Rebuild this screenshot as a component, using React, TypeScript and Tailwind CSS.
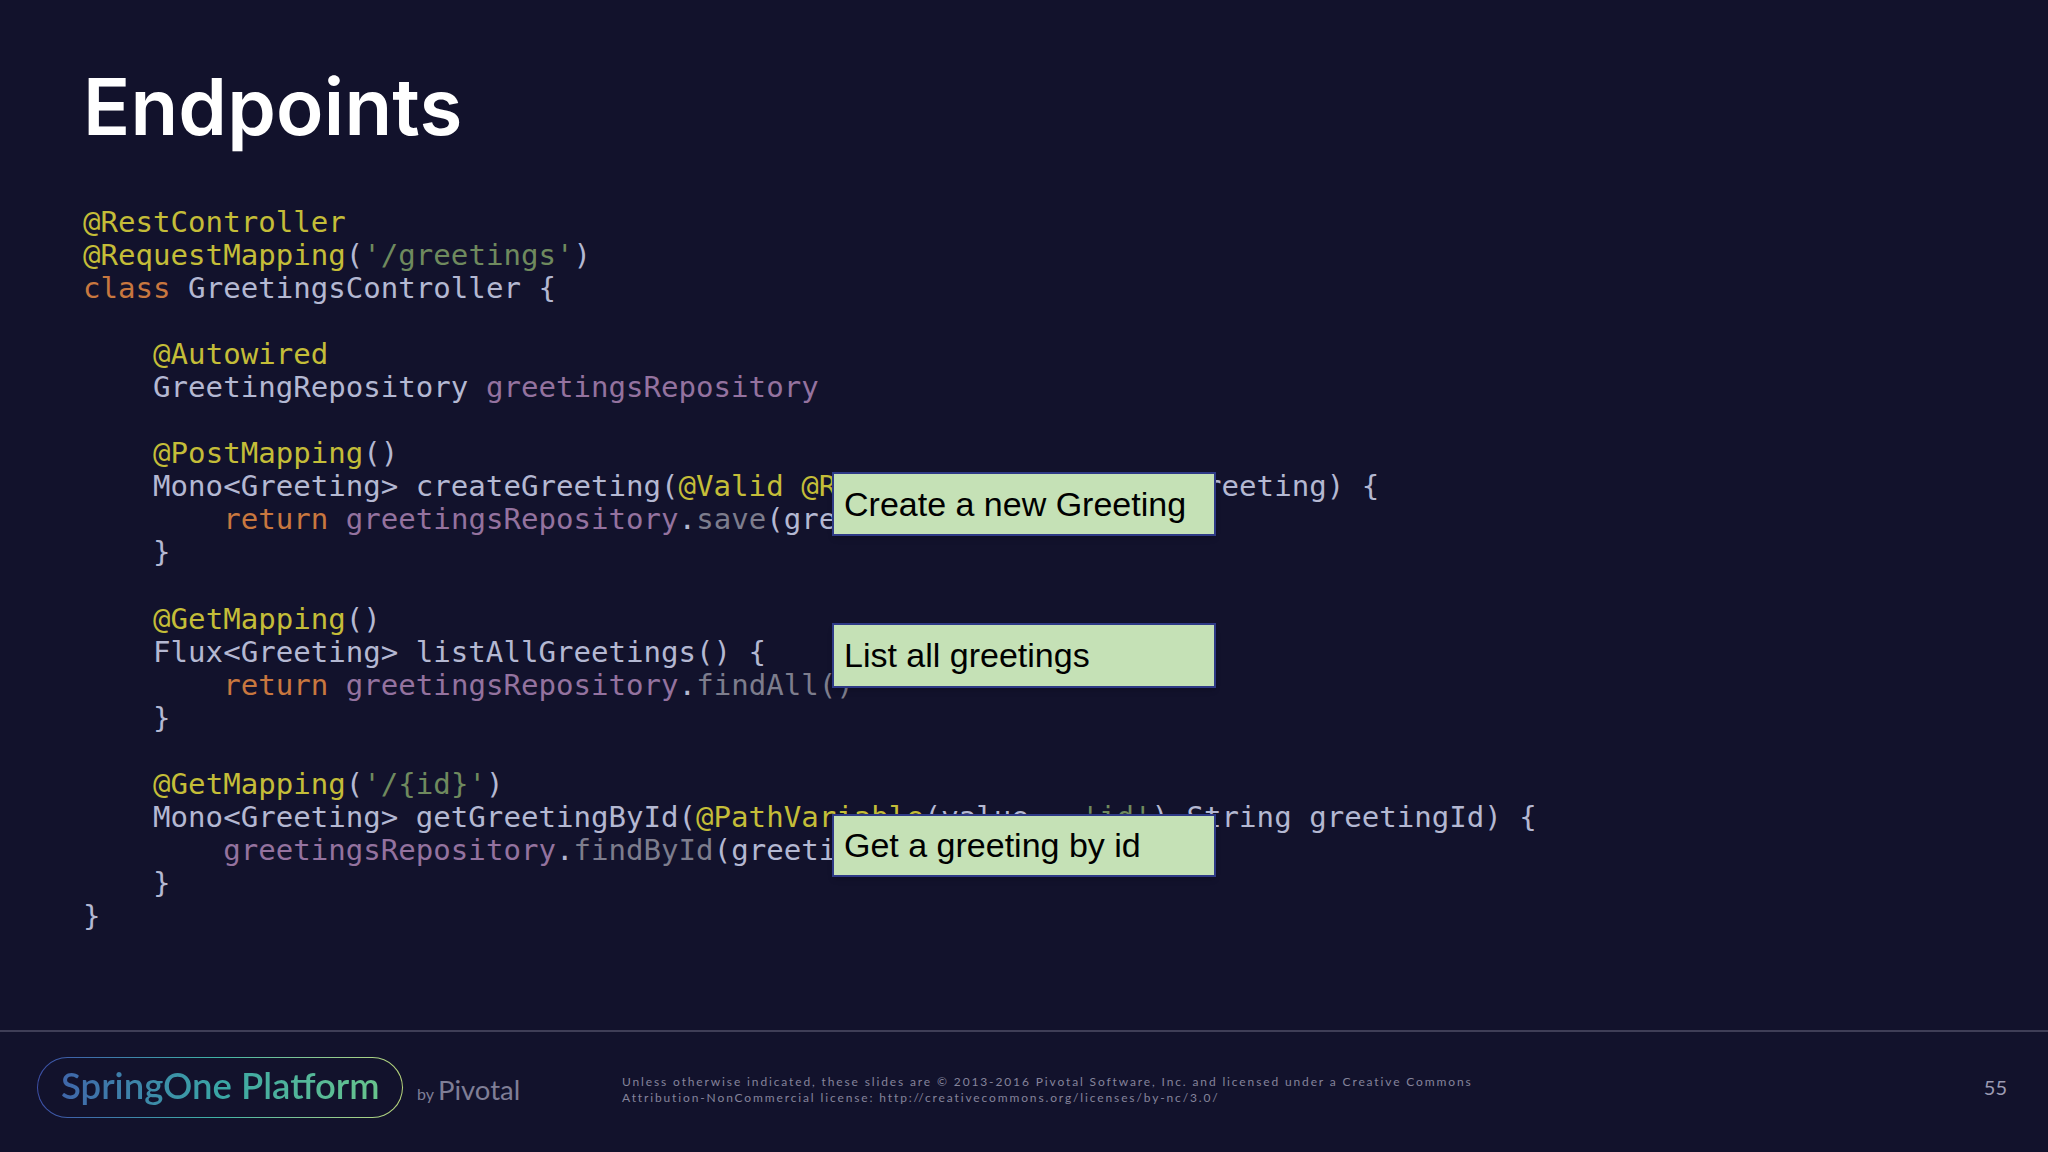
const annot = "text-[#c4bd38]";
const str = "text-[#6f8a5e]";
const kw = "text-[#c8773f]";
const field = "text-[#94729f]";
const method = "text-[#7d7d8d]";

type Part = [string, string?];

const code: Part[][] = [
  [["@RestController", annot]],
  [["@RequestMapping", annot], ["("], ["'/greetings'", str], [")"]],
  [["class", kw], [" GreetingsController {"]],
  [],
  [["    "], ["@Autowired", annot]],
  [["    GreetingRepository "], ["greetingsRepository", field]],
  [],
  [["    "], ["@PostMapping", annot], ["()"]],
  [["    Mono<Greeting> createGreeting("], ["@Valid", annot], [" "], ["@RequestBody", annot], [" Greeting greeting) {"]],
  [["        "], ["return", kw], [" "], ["greetingsRepository", field], ["."], ["save", method], ["(greeting)"]],
  [["    }"]],
  [],
  [["    "], ["@GetMapping", annot], ["()"]],
  [["    Flux<Greeting> listAllGreetings() {"]],
  [["        "], ["return", kw], [" "], ["greetingsRepository", field], ["."], ["findAll()", method]],
  [["    }"]],
  [],
  [["    "], ["@GetMapping", annot], ["("], ["'/{id}'", str], [")"]],
  [["    Mono<Greeting> getGreetingById("], ["@PathVariable", annot], ["(value = "], ["'id'", str], [") String greetingId) {"]],
  [["        "], ["greetingsRepository", field], ["."], ["findById", method], ["(greetingId)"]],
  [["    }"]],
  [["}"]],
];

function Callout({ className, text }: { className: string; text: string }) {
  return (
    <div
      className={`absolute left-[749px] w-[384px] flex items-center pl-[10px] bg-[#c5e1b6] border-2 border-[#2e3a86] shadow-md text-black text-[34px] font-['Liberation_Sans',sans-serif] ${className}`}
    >
      {text}
    </div>
  );
}

export default function App() {
  return (
    <div className="h-screen w-full flex flex-col overflow-hidden bg-[#12122c]">
      <div className="flex-1 pl-[83px]">
        <h1 className="pt-[59px] h-[206px] text-[78px] leading-[96px] font-semibold tracking-[0.2px] text-white font-['Inter',sans-serif]">
          Endpoints
        </h1>
        <div className="relative">
          <pre className="text-[29.1px] leading-[33.05px] text-[#b4b8d2] font-['DejaVu_Sans_Mono',monospace]">
            {code.map((line, i) => (
              <div key={i} className="h-[33.05px]">
                {line.map(([t, c], j) => (
                  <span key={j} className={c}>
                    {t}
                  </span>
                ))}
              </div>
            ))}
          </pre>
          <Callout className="top-[266px] h-[64px]" text="Create a new Greeting" />
          <Callout className="top-[417px] h-[65px]" text="List all greetings" />
          <Callout className="top-[608px] h-[63px]" text="Get a greeting by id" />
        </div>
      </div>

      <footer className="h-[122px] border-t-2 border-[#3f3e57] flex items-center pl-[37px] pr-[41px] pb-[10px]">
        <div className="w-[366px] h-[61px] rounded-full p-px bg-gradient-to-r from-[#3d4fa8] via-[#3fb5a5] to-[#b9d77c]">
          <div className="h-full rounded-full bg-[#12122c] flex items-center pl-[23px]">
            <span className="text-[36.5px] font-semibold pb-[4px] text-transparent bg-clip-text bg-gradient-to-r from-[#3f66aa] via-[#3aa6a5] to-[#68c48c] font-['Lato',sans-serif]">
              SpringOne Platform
            </span>
          </div>
        </div>
        <div className="ml-[14px] w-[205px] flex items-baseline pt-[6px] text-[#7f7e96] font-['Lato',sans-serif]">
          <span className="text-[16px]">by</span>
          <span className="ml-[4px] text-[27.5px]">Pivotal</span>
        </div>
        <p className="pt-[6px] text-[12px] leading-[16px] tracking-[1.87px] text-[#85849b] font-['Lato',sans-serif]">
          Unless otherwise indicated, these slides are © 2013-2016 Pivotal Software, Inc. and licensed under a Creative Commons
          <br />
          Attribution-NonCommercial license: http://creativecommons.org/licenses/by-nc/3.0/
        </p>
        <span className="ml-auto text-[20px] text-[#9c9bb2] font-['Lato',sans-serif]">55</span>
      </footer>
    </div>
  );
}
